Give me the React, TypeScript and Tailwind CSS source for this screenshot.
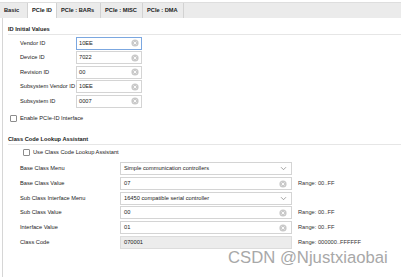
import React from "react";

const ClearIcon = () => (
  <svg width="8" height="8" viewBox="0 0 8 8" className="shrink-0">
    <circle cx="4" cy="4" r="3.6" fill="#c9c9c9" />
    <path d="M2.6 2.6 L5.4 5.4 M5.4 2.6 L2.6 5.4" stroke="#fff" strokeWidth="0.9" />
  </svg>
);

const Chevron = () => (
  <svg width="7" height="5" viewBox="0 0 7 5" className="shrink-0">
    <path d="M1 1.2 L3.5 3.7 L6 1.2" stroke="#8a8a8a" strokeWidth="0.8" fill="none" />
  </svg>
);

const Checkbox = () => (
  <span className="inline-block w-[7px] h-[7px] border border-[#8c8c8c] rounded-[1px] bg-white shrink-0" />
);

function Row1({ label, value, focused }: { label: string; value: string; focused?: boolean }) {
  return (
    <div className="flex items-center h-[14.5px]">
      <div className="w-[73px] pl-[17px] shrink-0 whitespace-nowrap">{label}</div>
      <div
        className={`w-[66px] h-[13px] flex items-center justify-between pl-[2px] pr-[2px] bg-white border ${
          focused ? "border-[#7ba7e0]" : "border-[#d4d4d4]"
        }`}
      >
        <span>{value}</span>
        <ClearIcon />
      </div>
    </div>
  );
}

function Row2({
  label,
  value,
  kind,
  range,
}: {
  label: string;
  value: string;
  kind: "select" | "input" | "disabled";
  range?: string;
}) {
  return (
    <div className="flex items-center h-[14.7px]">
      <div className="w-[117px] pl-[17px] shrink-0 whitespace-nowrap">{label}</div>
      <div
        className={`w-[172px] h-[13px] shrink-0 flex items-center justify-between pl-[3px] pr-[4px] border ${
          kind === "disabled" ? "bg-[#ececec] border-[#dcdcdc]" : "bg-white border-[#d4d4d4]"
        }`}
      >
        <span className="whitespace-nowrap">{value}</span>
        {kind === "select" && <Chevron />}
        {kind === "input" && <ClearIcon />}
      </div>
      {range && <div className="ml-[6px] whitespace-nowrap text-[#333]">{range}</div>}
    </div>
  );
}

export default function App() {
  const tabs = ["Basic", "PCIe ID", "PCIe : BARs", "PCIe : MISC", "PCIe : DMA"];
  const widths = ["w-[28px]", "w-[29px]", "w-[44px]", "w-[42px]", "w-[41px]"];
  return (
    <div
      className="relative w-[401px] h-[277px] bg-white overflow-hidden text-[5.7px] leading-[7px] text-[#222]"
      style={{ fontFamily: '"Liberation Sans", Arial, sans-serif' }}
    >
      <div className="h-[2px] bg-white" />
      <div className="flex h-[16px] bg-[#ebebeb] border-t border-[#dedede]">
        {tabs.map((t, i) => (
          <div
            key={t}
            className={`${widths[i]} flex items-center pl-[4px] font-bold border-r border-[#d2d2d2] whitespace-nowrap ${
              i === 1 ? "bg-white" : ""
            }`}
          >
            {t}
          </div>
        ))}
      </div>
      <div className="ml-[2px] border-l border-[#d6d6d6] h-[259px]">
        <div className="pt-[8px] pl-[5px] flex items-end">
          <span className="font-bold whitespace-nowrap">ID Initial Values</span>
        </div>
        <div className="ml-[5px] border-t border-[#e6e6e6] mt-[1px]" />
        <div className="pt-[1px]">
          <Row1 label="Vendor ID" value="10EE" focused />
          <Row1 label="Device ID" value="7022" />
          <Row1 label="Revision ID" value="00" />
          <Row1 label="Subsystem Vendor ID" value="10EE" />
          <Row1 label="Subsystem ID" value="0007" />
        </div>
        <div className="flex items-center gap-[3px] pl-[7px] mt-[6px]">
          <Checkbox />
          <span>Enable PCIe-ID Interface</span>
        </div>
        <div className="pt-[14px] pl-[5px]">
          <span className="font-bold whitespace-nowrap">Class Code Lookup Assistant</span>
        </div>
        <div className="ml-[5px] border-t border-[#e6e6e6] mt-[1px]" />
        <div className="flex items-center gap-[3px] pl-[20px] mt-[4px]">
          <Checkbox />
          <span>Use Class Code Lookup Assistant</span>
        </div>
        <div className="mt-[6px]">
          <Row2 label="Base Class Menu" value="Simple communication controllers" kind="select" />
          <Row2 label="Base Class Value" value="07" kind="input" range="Range: 00..FF" />
          <Row2 label="Sub Class Interface Menu" value="16450 compatible serial controller" kind="select" />
          <Row2 label="Sub Class Value" value="00" kind="input" range="Range: 00..FF" />
          <Row2 label="Interface Value" value="01" kind="input" range="Range: 00..FF" />
          <Row2 label="Class Code" value="070001" kind="disabled" range="Range: 000000..FFFFFF" />
        </div>
      </div>
      <div
        className="absolute left-[228px] top-[250px] text-[16.7px] text-[#a8a8a8] whitespace-nowrap leading-none"
        style={{ fontFamily: '"Liberation Sans", Arial, sans-serif' }}
      >
        CSDN @Njustxiaobai
      </div>
    </div>
  );
}
